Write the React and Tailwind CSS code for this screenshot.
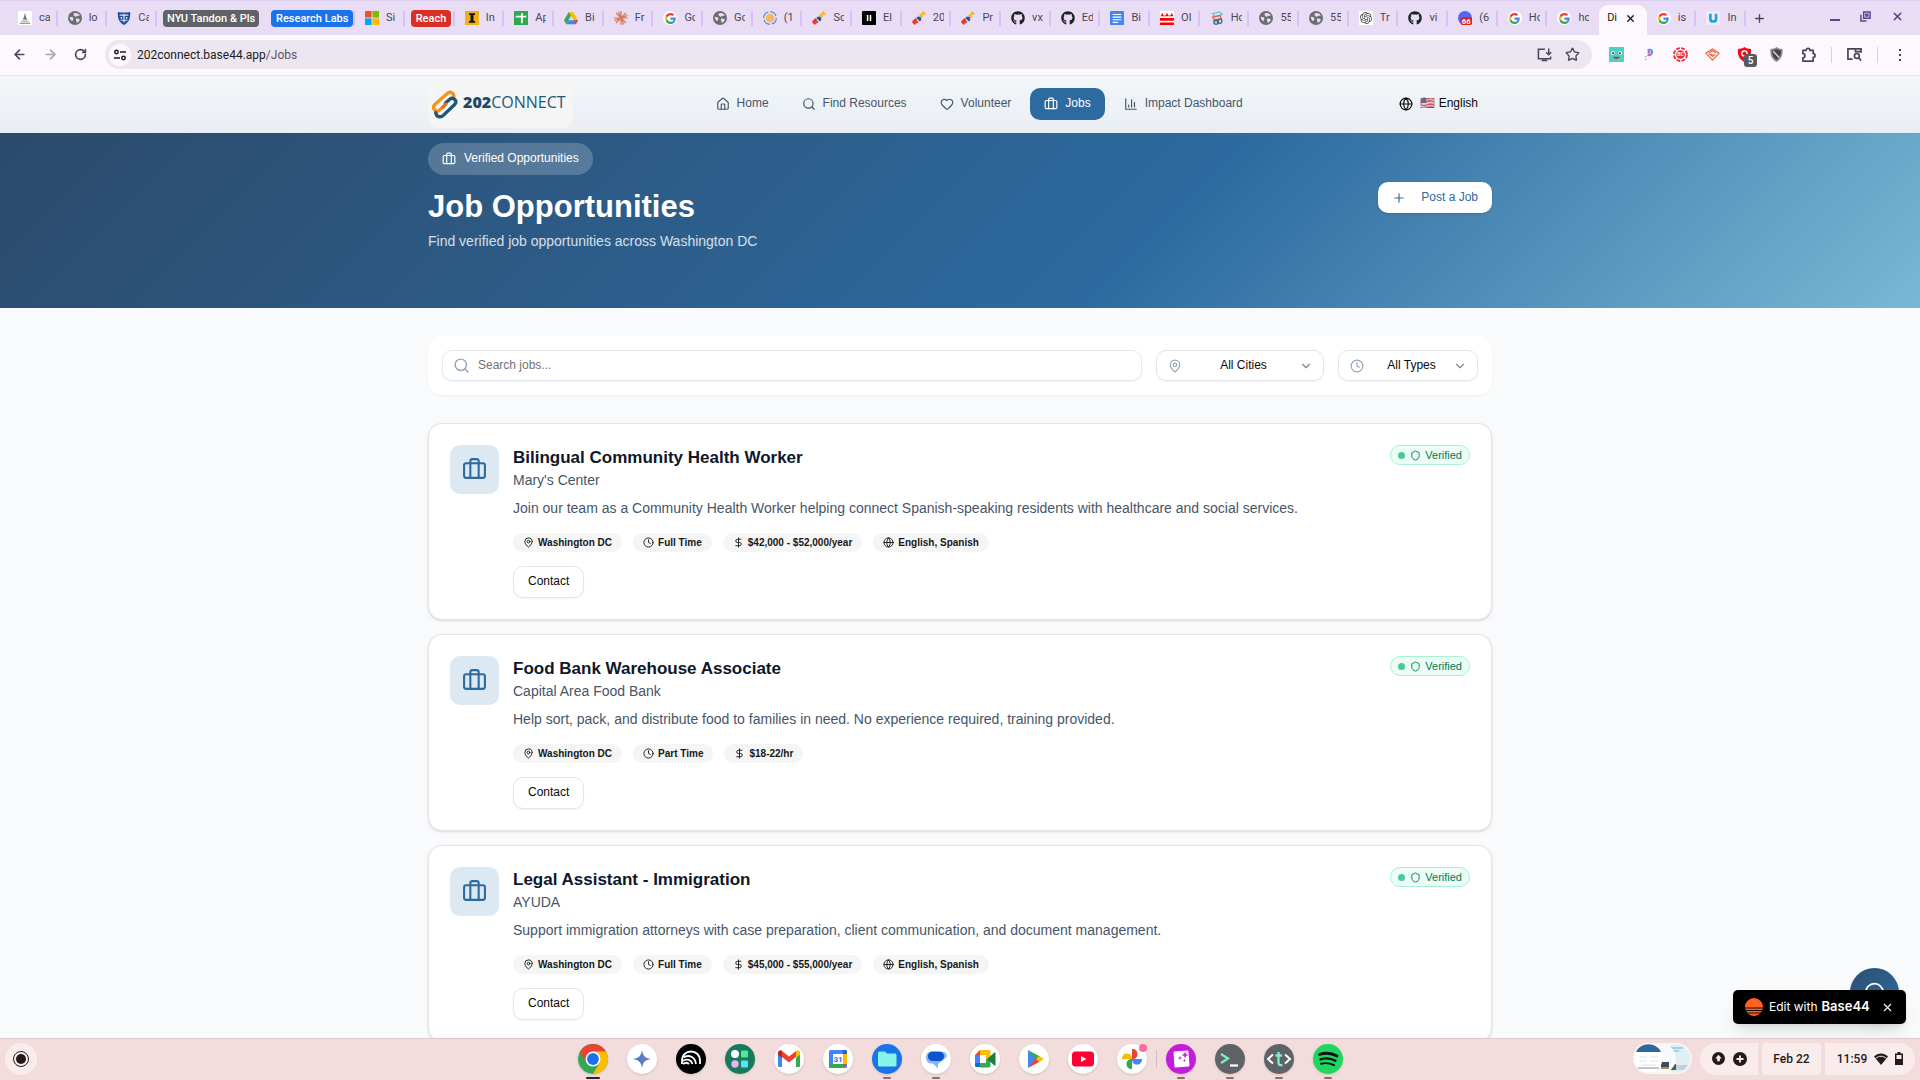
import React, { useState } from "react";
import {
  ArrowLeft,
  ArrowRight,
  Briefcase,
  ChevronDown,
  Clock,
  DollarSign,
  Globe,
  Heart,
  House,
  MapPin,
  MessageCircle,
  Plus,
  RotateCw,
  Search,
  Shield,
  Star,
  X,
} from "lucide-react";
import { FaGithub } from "react-icons/fa";
import { SiOpenai } from "react-icons/si";

const jobs = [
  {
    id: 1,
    title: "Bilingual Community Health Worker",
    company: "Mary's Center",
    description:
      "Join our team as a Community Health Worker helping connect Spanish-speaking residents with healthcare and social services.",
    type: "Full Time",
    pay: "$42,000 - $52,000/year",
    languages: "English, Spanish",
  },
  {
    id: 2,
    title: "Food Bank Warehouse Associate",
    company: "Capital Area Food Bank",
    description:
      "Help sort, pack, and distribute food to families in need. No experience required, training provided.",
    type: "Part Time",
    pay: "$18-22/hr",
  },
  {
    id: 3,
    title: "Legal Assistant - Immigration",
    company: "AYUDA",
    description:
      "Support immigration attorneys with case preparation, client communication, and document management.",
    type: "Full Time",
    pay: "$45,000 - $55,000/year",
    languages: "English, Spanish",
  },
];

const tabs = [
  { icon: "statue", text: "ca" },
  { icon: "globe", text: "lo" },
  { icon: "crest", text: "Ca" },
  { group: "NYU Tandon & Pls", slot: "w-[107px] pl-[6px]", color: "bg-[#5f6368] px-[4px]" },
  { group: "Research Labs", slot: "w-[91px] pl-[7px]", color: "bg-[#1a73e8] px-[5px]", line: true },
  { icon: "microsoft", text: "Si" },
  { group: "Reach", slot: "w-[50px] pl-[6px]", color: "bg-[#d93025] px-[5px]", line: true },
  { icon: "inst", text: "In" },
  { icon: "sheets", text: "Ap" },
  { icon: "drive", text: "Bi" },
  { icon: "claude", text: "Fr" },
  { icon: "google", text: "Go" },
  { icon: "globe", text: "Go" },
  { icon: "ring", text: "(1" },
  { icon: "mlh", text: "So" },
  { icon: "eleven", text: "El" },
  { icon: "mlh", text: "20" },
  { icon: "mlh", text: "Pr" },
  { icon: "github", text: "vx" },
  { icon: "github", text: "Ed" },
  { icon: "docs", text: "Bi" },
  { icon: "dc", text: "Ol" },
  { icon: "hack", text: "Ho" },
  { icon: "globe", text: "55" },
  { icon: "globe", text: "55" },
  { icon: "openai", text: "Tr" },
  { icon: "github", text: "vi" },
  { icon: "discord", text: "(6" },
  { icon: "google", text: "Ho" },
  { icon: "google", text: "ho", noLine: true },
  { active: true, text: "Di" },
  { icon: "google", text: "is" },
  { icon: "udemy", text: "In" },
];

const GoogleG = ({ className = "" }) => (
  <svg viewBox="0 0 48 48" className={className}>
    <path fill="#EA4335" d="M24 9.5c3.5 0 6.700 1.200 9.200 3.600l6.900-6.900C35.900 2.400 30.500 0 24 0 14.600 0 6.500 5.400 2.600 13.200l8 6.200C12.400 13.700 17.700 9.500 24 9.500z" />
    <path fill="#4285F4" d="M47 24.500c0-1.600-.2-3.100-.4-4.500H24v9h12.900c-.6 3-2.200 5.500-4.800 7.200l7.700 6C44.400 38 47 31.800 47 24.500z" />
    <path fill="#FBBC05" d="M10.500 28.600c-.5-1.500-.8-3-.8-4.600s.3-3.100.8-4.600l-8-6.200C.9 16.500 0 20.100 0 24s.9 7.500 2.600 10.800z" />
    <path fill="#34A853" d="M24 48c6.500 0 11.900-2.100 15.900-5.800l-7.700-6c-2.200 1.500-4.900 2.300-8.200 2.300-6.300 0-11.600-4.200-13.500-9.900l-8 6.200C6.500 42.600 14.600 48 24 48z" />
  </svg>
);

const Favicon = ({ name }) => {
  const box = "h-[14px] w-[14px] shrink-0";
  if (name === "google")
    return (
      <span className="flex h-[14px] w-[14px] shrink-0 items-center justify-center rounded-full bg-white">
        <GoogleG className="h-[11px] w-[11px]" />
      </span>
    );
  if (name === "github") return <FaGithub className={`${box} text-[#1f2328]`} />;
  if (name === "openai")
    return (
      <span className="flex h-[14px] w-[14px] shrink-0 items-center justify-center bg-white">
        <SiOpenai className="h-3 w-3 text-[#444]" />
      </span>
    );
  return (
    <svg viewBox="0 0 16 16" className={box}>
      {name === "globe" && (
        <>
          <circle cx="8" cy="8" r="8" fill="#6b6d70" />
          <path d="M2 6.500C4 7 5 6.500 6 8c1 1.500-1 1.500-.5 3.500C4 12 2 9 2 6.500zM7 2.500c2-.8 5 0 6.500 2.500-1 1-2.500 0-3.500 1S8 6.500 7 5.500s-1-2 0-3zM9 9c1.500-1 3.500-.5 4.500 1-.5 2-2 3-3.500 3.500.3-1.500-1.500-3-1-4.500z" fill="#e9ddf5" />
        </>
      )}
      {name === "statue" && (
        <>
          <rect width="16" height="16" fill="#fff" />
          <path d="M8 2l1 4 1.500 4h-5L7 6zM4 11h8v1H4zM2 13.500h12v1H2z" fill="#777" />
        </>
      )}
      {name === "crest" && (
        <>
          <path d="M1 1c4 1 10 1 14 0 .5 7-1.500 12-7 15C2.500 13 .5 8 1 1z" fill="#1f4b99" />
          <path d="M3 4h10v1.500H3zM4 10h8v1H4zM7.300 3h1.400v10H7.300z" fill="#dbe6f7" />
          <circle cx="5" cy="7.800" r="1" fill="#fff" />
          <circle cx="11" cy="7.800" r="1" fill="#fff" />
        </>
      )}
      {name === "microsoft" && (
        <>
          <rect width="7.500" height="7.500" fill="#f25022" />
          <rect x="8.500" width="7.500" height="7.500" fill="#7fba00" />
          <rect y="8.500" width="7.500" height="7.500" fill="#00a4ef" />
          <rect x="8.500" y="8.500" width="7.500" height="7.500" fill="#ffb900" />
        </>
      )}
      {name === "inst" && (
        <>
          <rect width="16" height="16" fill="#eeb211" />
          <path d="M4.500 2.500h7v2.200H9.700v6.600h1.800v2.200h-7v-2.200h1.800V4.700H4.500z" fill="#111" />
        </>
      )}
      {name === "sheets" && (
        <>
          <rect width="16" height="16" fill="#2fa853" />
          <path d="M2 6.500h12M9 2.500v11.500" stroke="#fff" strokeWidth="2" />
        </>
      )}
      {name === "drive" && (
        <>
          <path d="M5.500 1h5l5.500 9.500h-5z" fill="#fbbc04" />
          <path d="M5.500 1L0 10.500 2.500 15 8 5.500z" fill="#34a853" />
          <path d="M2.500 15h11l2.500-4.500H5z" fill="#4285f4" />
          <path d="M11 10.500h5L13.500 15z" fill="#ea4335" />
        </>
      )}
      {name === "claude" && (
        <path d="M8 0v16M0 8h16M2.300 2.300l11.400 11.400M13.700 2.300L2.300 13.700M5 .6l6 14.800M.6 11l14.800-6" stroke="#d97757" strokeWidth="1.400" />
      )}
      {name === "ring" && (
        <>
          <circle cx="8" cy="8" r="7.200" fill="none" stroke="#4b7fd0" strokeWidth="1.200" strokeDasharray="9 2" />
          <circle cx="8" cy="8" r="5" fill="#f4b860" />
        </>
      )}
      {name === "mlh" && (
        <g strokeWidth="2.600" fill="none">
          <path d="M1 12l3 3M3 10l3.500 3.500M1 13l4-4" stroke="#e73427" />
          <path d="M6 7l4 4M7 10l3-3" stroke="#1d539f" />
          <path d="M9 4l3 3M12 1l3 3M10 5l4-3" stroke="#f8b92a" />
        </g>
      )}
      {name === "eleven" && (
        <>
          <rect width="16" height="16" rx="1" fill="#000" />
          <path d="M5.500 4.500h1.800v7H5.500zM8.800 4.500h1.800v7H8.800z" fill="#fff" />
        </>
      )}
      {name === "docs" && (
        <>
          <rect width="16" height="16" rx="1" fill="#4285f4" />
          <path d="M3 4h10M3 7h10M3 10h10M3 13h6" stroke="#fff" strokeWidth="1.400" />
        </>
      )}
      {name === "dc" && (
        <>
          <rect width="16" height="16" fill="#fff" />
          <path d="M0 8h16v3H0zM0 13h16v3H0z" fill="#f00" />
          <path d="M1 5l1.500-3L4 5zM6.500 5L8 2l1.500 3zM12 5l1.500-3L15 5zM1 5h14v1H1z" fill="#f00" />
        </>
      )}
      {name === "hack" && (
        <g fill="none" strokeWidth="1.500">
          <path d="M3 3l8-2 3 3-8 3z" stroke="#5cc9c4" />
          <path d="M3 7l8-2 2 4-7 3z" stroke="#ee5a52" />
          <circle cx="7" cy="12.500" r="2.600" stroke="#2d6f7c" />
          <circle cx="11" cy="11.500" r="2.600" stroke="#2d6f7c" />
        </g>
      )}
      {name === "discord" && (
        <>
          <circle cx="8" cy="8" r="8" fill="#5865f2" />
          <rect x="3" y="7" width="13" height="9" rx="2" fill="#e01e1e" />
          <text x="9.500" y="14.600" textAnchor="middle" fontSize="9" fontWeight="700" fontFamily="Roboto, sans-serif" fill="#fff">66</text>
        </>
      )}
      {name === "udemy" && (
        <>
          <rect width="16" height="16" fill="#f1eafb" />
          <path d="M5 3v6c0 4 6.500 4 6.500 0V3" fill="none" stroke="#1fa2dd" strokeWidth="3" />
        </>
      )}
    </svg>
  );
};

const TabStrip = () => (
  <div className="flex h-[35px] shrink-0 items-stretch border-t border-[#decff0] bg-[#e9ddf5] pl-2 text-[11px] text-[#4a4458]">
    <div className="flex min-w-0 flex-1 items-stretch">
      {tabs.map((tab, i) => {
        if (tab.group) {
          return (
            <div key={i} className={`flex shrink-0 items-center justify-between ${tab.slot}`}>
              <button className={`h-[17px] rounded-[4px] text-[11px] font-medium leading-[17px] whitespace-nowrap text-white ${tab.color}`}>
                {tab.group}
              </button>
              {tab.line && <span className="h-[15px] w-[2px] bg-[#d6c0f8]" />}
            </div>
          );
        }
        if (tab.active) {
          return (
            <div key={i} className="mt-1 ml-[2px] flex min-w-0 flex-1 items-center gap-[8px] rounded-t-[9px] bg-[#fdf7fe] pb-1 pl-[8px]">
              <span className="w-[10px] overflow-hidden text-[#1d1b20]">{tab.text}</span>
              <button aria-label="Close tab">
                <X size={11} strokeWidth={3} className="text-[#1d1b20]" />
              </button>
            </div>
          );
        }
        return (
          <div key={i} className="flex min-w-0 flex-1 items-center pl-[10px]">
            <Favicon name={tab.icon} />
            <span className="ml-[7px] w-[11px] overflow-hidden whitespace-nowrap">{tab.text}</span>
            {!tab.noLine && <span className="ml-auto h-[15px] w-[2px] bg-[#d6c0f8]" />}
          </div>
        );
      })}
    </div>
    <div className="flex w-[174px] items-center justify-between pr-4 pl-[7px] text-[#5b4589]">
      <button aria-label="New tab" className="mr-auto">
        <Plus size={13} strokeWidth={2.500} className="text-[#4a4458]" />
      </button>
      <div className="flex items-center gap-[20px] pb-1">
        <button aria-label="Minimize" className="mt-2 h-[2px] w-[10px] bg-[#5b4589]" />
        <button aria-label="Restore">
          <svg viewBox="0 0 12 12" className="h-[11px] w-[11px]" fill="none" stroke="currentColor" strokeWidth="1.600">
            <path d="M4 1h7v7H4zM1 4v7h6M6.500 3.500h2v2h-2z" />
          </svg>
        </button>
        <button aria-label="Close">
          <X size={13} strokeWidth={3} />
        </button>
      </div>
    </div>
  </div>
);

const Extensions = () => (
  <div className="flex shrink-0 items-center gap-[15px] pr-[13px] text-[#4a4458]">
    <div className="flex items-center gap-[17px]">
      <svg viewBox="0 0 16 16" className="h-[15px] w-[15px]">
        <rect width="16" height="16" rx="1" fill="#4fd1c0" />
        <circle cx="4" cy="6.500" r="2" fill="#fff" />
        <circle cx="12" cy="6.500" r="2" fill="#fff" />
        <circle cx="4.300" cy="6.700" r="1" fill="#222" />
        <circle cx="11.700" cy="6.700" r="1" fill="#222" />
        <path d="M4.500 10.500h7c-.5 3-6.500 3-7 0z" fill="#b23b48" />
      </svg>
      <svg viewBox="0 0 16 16" className="h-[15px] w-[15px]" fill="none" strokeWidth="2">
        <path d="M7 3.500c3.500-2 6 .8 4.200 4" stroke="#4b8cf5" />
        <path d="M11 7.500c-1.200 1.800-3.200 1.500-4 .8" stroke="#a06ae8" />
        <circle cx="8.500" cy="5.500" r=".6" stroke="#f05a4a" />
        <path d="M5 9.500v5" stroke="#f28b82" strokeWidth="1.600" strokeDasharray="1.500 1.500" />
      </svg>
      <svg viewBox="0 0 16 16" className="h-[15px] w-[15px]">
        <circle cx="8" cy="8" r="6.900" fill="#fff" stroke="#ee2b3b" strokeWidth="2" strokeDasharray="4 1.400" />
        <circle cx="8" cy="8" r="4.600" fill="#ee2b3b" />
        <text x="8" y="10" textAnchor="middle" fontSize="5.500" fontWeight="700" fontFamily="Roboto, sans-serif" fill="#fff">BC</text>
      </svg>
      <svg viewBox="0 0 16 16" className="h-[15px] w-[15px]" fill="none" stroke="#f4693c" strokeWidth="1.300">
        <path d="M1 6.500L8 2l7 4.500L8 14zM4 6.500L8 4l4 2.500M4 7l4 3 3-2M6.500 7.500L9 9" />
      </svg>
      <span className="relative">
        <svg viewBox="0 0 16 16" className="h-[15px] w-[15px]">
          <path d="M8 0c2 1.500 4.500 2 7 2 .5 7-1.500 11-7 14C2.500 13 .5 9 1 2c2.500 0 5-.5 7-2z" fill="#e3141c" />
          <circle cx="8" cy="7" r="2.800" fill="none" stroke="#fff" strokeWidth="1.300" />
        </svg>
        <span className="absolute top-[7px] left-[7px] h-[13px] w-[13px] rounded-[3px] bg-[#575a5e] text-center text-[10px] font-medium leading-[13px] text-white">
          5
        </span>
      </span>
      <svg viewBox="0 0 16 16" className="h-[15px] w-[15px]">
        <path d="M8 0c2 1.500 4 2 6.500 2 .5 7-1.500 11-6.500 14C3 13 1 9 1.500 2 4 2 6 1.500 8 0z" fill="#8b8b90" />
        <path d="M8 2c1.500 1 3 1.300 4.800 1.500.2 5-1.300 8-4.800 10.200C4.500 11.500 3 8.500 3.200 3.500 5 3.300 6.500 3 8 2z" fill="#444449" />
        <path d="M4.500 4.500l6.500 7" stroke="#ddd" strokeWidth="1.500" />
      </svg>
      <svg viewBox="0 0 16 16" className="h-[15px] w-[15px]" fill="none" stroke="currentColor" strokeWidth="1.800" strokeLinejoin="round">
        <path d="M2 3.500h3.500a2 2 0 0 1 4 0H13V7a2 2 0 0 1 0 4v4H2v-3.500a2.200 2.200 0 0 0 0-4.400z" />
      </svg>
    </div>
    <span className="h-4 w-px bg-[#dccdf0]" />
    <svg viewBox="0 0 16 16" className="h-[15px] w-[15px]" fill="none" stroke="currentColor" strokeWidth="1.800">
      <path d="M6 13H1V2h14v4M9 2v3h6" />
      <circle cx="10.500" cy="9.500" r="2.600" />
      <path d="M12.500 11.500L15 14.500" />
    </svg>
    <span className="h-4 w-px bg-[#dccdf0]" />
    <button aria-label="Menu" className="flex w-[14px] flex-col items-center gap-[3px]">
      <span className="h-[2px] w-[2px] bg-[#4a4458]" />
      <span className="h-[2px] w-[2px] bg-[#4a4458]" />
      <span className="h-[2px] w-[2px] bg-[#4a4458]" />
    </button>
  </div>
);

const Toolbar = () => (
  <div className="flex h-[41px] shrink-0 items-center border-b border-[#e7dfe9] bg-[#fdf7fe] pb-px text-[#4a4458]">
    <div className="flex w-[105px] shrink-0 items-center gap-4 pl-3">
      <button aria-label="Back"><ArrowLeft size={15} strokeWidth={2.500} /></button>
      <button aria-label="Forward"><ArrowRight size={15} strokeWidth={2.500} className="text-[#aaa3ae]" /></button>
      <button aria-label="Reload"><RotateCw size={13} strokeWidth={3} /></button>
    </div>
    <div className="mr-[17px] flex h-[29px] min-w-0 flex-1 items-center rounded-full bg-[#ece6f0] pr-[12px] pl-[4px]">
      <button aria-label="Site information" className="flex h-[22px] w-[22px] items-center justify-center rounded-full bg-[#fdf7fe]">
        <svg viewBox="0 0 12 12" className="h-3 w-3" fill="none" stroke="#1d1b20" strokeWidth="1.500">
          <circle cx="2.500" cy="3" r="1.700" />
          <path d="M6 3h6M0 9h6" />
          <circle cx="9.500" cy="9" r="1.700" />
        </svg>
      </button>
      <div className="ml-[6px] flex-1 text-[12px] text-[#1d1b20]">
        202connect.base44.app<span className="text-[#5c5566]">/Jobs</span>
      </div>
      <svg viewBox="0 0 16 16" className="h-[15px] w-[15px]" fill="none" stroke="currentColor" strokeWidth="1.600">
        <path d="M8.500 2.500h-7v10h13V10M5 14.500h6M12.500 1.500V8M9.800 5.500l2.700 2.700 2.700-2.700" />
      </svg>
      <Star size={15} strokeWidth={2.200} className="ml-[13px]" />
    </div>
    <Extensions />
  </div>
);

const Logo = () => (
  <a href="#home" className="flex h-12 w-[145px] items-center gap-[5px] rounded-[10px] bg-[#f5f5f5] pl-[3px]">
    <svg viewBox="0 0 56 60" className="h-[29px] w-[27px] shrink-0" fill="none" strokeWidth="7" strokeLinecap="round">
      <path d="M47 15C49 6 40 2 34 7L8 30c-7 7 2 17 9 12l8-7" stroke="#f7941d" />
      <path d="M10 47c1 9 10 11 16 5l23-22c7-8-3-16-10-11l-9 8" stroke="#1f5877" />
      <path d="M24 36l7-7" stroke="#f26a21" />
    </svg>
    <span className="pb-[4px] font-['Open_Sans',sans-serif] text-[16px] font-medium leading-5 text-[#1f5877]">
      <b className="font-extrabold text-[#1c4966]">202</b>CONNECT
    </span>
  </a>
);

const ChartIcon = () => (
  <svg viewBox="0 0 24 24" className="h-[14px] w-[14px]" fill="none" stroke="currentColor" strokeWidth="2" strokeLinecap="round" strokeLinejoin="round">
    <path d="M3 3v18h18M18 17V9M13 17V5M8 17v-3" />
  </svg>
);

const navItems = [
  { label: "Home", icon: <House size={14} /> },
  { label: "Find Resources", icon: <Search size={14} /> },
  { label: "Volunteer", icon: <Heart size={14} /> },
  { label: "Jobs", icon: <Briefcase size={14} />, active: true },
  { label: "Impact Dashboard", icon: <ChartIcon /> },
];

const Header = () => (
  <header className="border-b border-[#e6edf3] bg-linear-to-b from-[#f3f7f9] to-[#e9eef4]">
    <div className="mx-auto flex h-14 max-w-[1120px] items-center justify-between px-7">
      <Logo />
      <nav className="flex items-center gap-[5px]">
        {navItems.map((item) => (
          <a
            key={item.label}
            href={`#${item.label}`}
            className={`flex h-8 items-center gap-[7px] rounded-[10px] px-[14px] text-[12px] ${
              item.active ? "bg-[#2d6a9f] text-white" : "text-[#475569]"
            }`}
          >
            {item.icon}
            <span className="pb-[2px]">{item.label}</span>
          </a>
        ))}
      </nav>
      <button className="flex h-8 items-center gap-[7px] px-[14px] text-[12px] text-[#0a0a0a]">
        <Globe size={14} />
        <span className="pb-[2px]">🇺🇸 English</span>
      </button>
    </div>
  </header>
);

const Hero = () => (
  <section className="bg-[linear-gradient(135deg,#2c4a6b_0%,#2d6a9f_60%,#7ab8d6_100%)] pt-[10px] pb-14">
    <div className="mx-auto flex max-w-[1120px] items-center justify-between px-7">
      <div>
        <div className="flex h-8 w-fit items-center gap-[8px] rounded-full bg-white/20 px-[14px] text-[12px] text-white">
          <Briefcase size={14} />
          <span className="pb-[2px]">Verified Opportunities</span>
        </div>
        <h1 className="mt-[14px] text-[31px] font-bold leading-[35px] text-white">Job Opportunities</h1>
        <p className="mt-[7px] text-[14px] leading-[21px] text-white/80">
          Find verified job opportunities across Washington DC
        </p>
      </div>
      <button className="flex h-[31px] items-center rounded-[10px] bg-white px-[14px] text-[12px] text-[#2d6a9f] shadow-sm">
        <Plus size={14} className="mr-[15px]" />
        <span className="pb-[2px]">Post a Job</span>
      </button>
    </div>
  </section>
);

const FilterSelect = ({ icon, label, options, className }) => {
  const [value, setValue] = useState(options[0]);
  return (
    <label className={`flex h-[31px] items-center rounded-[10px] border border-[#e5e5e5] pr-[10px] pl-[11px] shadow-xs ${className}`}>
      {icon}
      <select
        aria-label={label}
        value={value}
        onChange={(e) => setValue(e.target.value)}
        className="min-w-0 flex-1 appearance-none bg-transparent pb-[2px] pl-[6px] text-center text-[12px] text-[#0a0a0a] outline-none [text-align-last:center]"
      >
        {options.map((o) => (
          <option key={o}>{o}</option>
        ))}
      </select>
      <ChevronDown size={14} className="text-[#858585]" />
    </label>
  );
};

const Tag = ({ icon: Icon, children }) => (
  <span className="flex h-[19px] items-center gap-1 rounded-full bg-[#f5f5f5] px-[10px] text-[10px] font-semibold text-[#171717]">
    <Icon size={11} />
    {children}
  </span>
);

const JobCard = ({ job }) => (
  <article className="flex items-start gap-[14px] rounded-[14px] border border-[#e4e4e7] bg-white p-[21px] shadow-sm">
    <div className="flex h-[49px] w-[49px] shrink-0 items-center justify-center rounded-[10px] bg-[#dce8f2]">
      <Briefcase size={25} className="text-[#2d6a9f]" />
    </div>
    <div className="min-w-0 flex-1">
      <h3 className="text-[17px] font-semibold leading-[25px] text-[#0f172a]">{job.title}</h3>
      <p className="text-[14px] leading-[21px] text-[#475569]">{job.company}</p>
      <p className="mt-[7px] text-[14px] leading-[21px] text-[#475569]">{job.description}</p>
      <div className="mt-[14px] flex flex-wrap gap-[11px]">
        <Tag icon={MapPin}>Washington DC</Tag>
        <Tag icon={Clock}>{job.type}</Tag>
        <Tag icon={DollarSign}>{job.pay}</Tag>
        {job.languages && <Tag icon={Globe}>{job.languages}</Tag>}
      </div>
      <button className="mt-[14px] block h-8 rounded-[10px] border border-[#e5e5e5] bg-white px-[14px] pb-[2px] text-[12px] text-[#0a0a0a] shadow-xs">
        Contact
      </button>
    </div>
    <span className="flex h-5 items-center rounded-full border border-[#a7f3d0] bg-[#ecfdf5] px-[7px] text-[11px] text-[#047857]">
      <span className="mr-[5px] h-[7px] w-[7px] rounded-full bg-[#47c99a]" />
      <Shield size={11} className="mr-[4px]" />
      Verified
    </span>
  </article>
);

const JobsPage = () => (
  <main className="relative min-h-0 flex-1 overflow-hidden bg-[#f8fafc] font-['Liberation_Sans',Arial,sans-serif]">
    <Header />
    <Hero />
    <div className="mx-auto max-w-[1120px] px-7 py-7">
      <div className="flex gap-[14px] rounded-[14px] bg-white p-[14px] shadow-xs">
        <label className="flex h-[31px] min-w-0 flex-1 items-center gap-[8px] rounded-[10px] border border-[#e2e8f0] pl-[10px] shadow-xs">
          <Search size={17} className="text-[#94a3b8]" />
          <input
            type="text"
            aria-label="Search jobs"
            placeholder="Search jobs..."
            className="min-w-0 flex-1 bg-transparent pb-[2px] text-[12px] outline-none placeholder:text-[#737373]"
          />
        </label>
        <FilterSelect
          label="City"
          className="w-[168px]"
          icon={<MapPin size={14} className="text-[#94a3b8]" />}
          options={["All Cities", "Washington DC"]}
        />
        <FilterSelect
          label="Job type"
          className="w-[140px]"
          icon={<Clock size={14} className="text-[#94a3b8]" />}
          options={["All Types", "Full Time", "Part Time"]}
        />
      </div>
      <div className="mt-7 flex flex-col gap-[14px]">
        {jobs.map((job) => (
          <JobCard key={job.id} job={job} />
        ))}
      </div>
    </div>

    {/* floating chat + badge */}
    <button
      aria-label="Chat"
      className="absolute right-[21px] bottom-[21px] flex h-[49px] w-[49px] items-center justify-center rounded-full bg-linear-to-br from-[#2c4f73] to-[#2d6a9f] text-white shadow-lg"
    >
      <MessageCircle size={21} />
    </button>
    <div className="absolute right-[14px] bottom-[14px] flex h-[34px] w-[173px] items-center rounded-[5px] bg-black pr-[12px] pl-[12px] text-white shadow-lg">
      <svg viewBox="0 0 18 18" className="h-[18px] w-[18px]">
        <circle cx="9" cy="9" r="9" fill="#ff631f" />
        <path d="M0 10h18M0 12.500h18M0 15h18" stroke="#000" strokeWidth=".9" />
      </svg>
      <a href="#edit" className="ml-[6px] flex flex-1 items-center gap-1 whitespace-nowrap font-['Inter',sans-serif] text-[12px]">
        Edit with <b className="text-[13px] font-semibold">Base44</b>
      </a>
      <button aria-label="Dismiss">
        <X size={13} />
      </button>
    </div>
  </main>
);

const shelfApps = [
  {
    name: "Chrome",
    bg: "bg-white",
    mark: "bg-[#2b2224]",
    art: (
      <>
        <circle cx="15" cy="15" r="15" fill="#34a853" />
        <path d="M2 7.500A15 15 0 0 1 28 7.500H15L8.500 19z" fill="#ea4335" />
        <path d="M28 7.500A15 15 0 0 1 15 30l6.500-11.200L15 7.500z" fill="#fbbc04" />
        <circle cx="15" cy="15" r="7.500" fill="#fff" />
        <circle cx="15" cy="15" r="5.900" fill="#1a73e8" />
      </>
    ),
  },
  {
    name: "Gemini",
    bg: "bg-white",
    art: (
      <>
        <defs>
          <linearGradient id="gem" x1="0" x2="1"><stop stopColor="#2f86c8" /><stop offset="1" stopColor="#8a6cc8" /></linearGradient>
        </defs>
        <path d="M15 6c1 6 3 8 9 9-6 1-8 3-9 9-1-6-3-8-9-9 6-1 8-3 9-9z" fill="url(#gem)" />
      </>
    ),
  },
  {
    name: "Nearpod",
    bg: "bg-black",
    art: (
      <g fill="none" stroke="#fff" strokeWidth="1.800">
        <path d="M6 20v-3C6 11 10 7.500 15 7.500S24 11 24 17v3" />
        <path d="M7.500 13.500C13 10 19 13 20 20" />
        <path d="M6.500 17c4.500-3 9-1 10 3M7 20c2-1.500 4.500-1.500 6 0" />
      </g>
    ),
  },
  {
    name: "Apps",
    bg: "bg-[#187a5c]",
    art: (
      <>
        <circle cx="10" cy="10" r="4" fill="#fff" />
        <rect x="16" y="6.500" width="7" height="7" rx="1" fill="#4ceb90" />
        <circle cx="10" cy="20" r="3.700" fill="#efb2ef" />
        <rect x="16" y="16.500" width="7" height="7" rx="1" fill="#5ae3f2" />
      </>
    ),
  },
  {
    name: "Gmail",
    bg: "bg-white",
    art: (
      <>
        <path d="M4 8h4v15H5.500A1.500 1.500 0 0 1 4 21.500z" fill="#4285f4" />
        <path d="M22 8h4v13.500a1.500 1.500 0 0 1-1.500 1.500H22z" fill="#34a853" />
        <path d="M4 9c0-2.500 2.500-3 4-2l7 5.500L22 7v6l-7 5.500L8 13l-4-3z" fill="#ea4335" />
        <path d="M22 7c2-1.500 4-.5 4 2v1.500L22 14z" fill="#fbbc04" />
        <path d="M4 9c0-2 2-3 4-2v7l-4-3.500z" fill="#c5221f" />
      </>
    ),
  },
  {
    name: "Calendar",
    bg: "bg-white",
    art: (
      <>
        <rect x="6" y="6" width="18" height="18" rx="1.500" fill="#4285f4" />
        <path d="M20 6h2.500A1.500 1.500 0 0 1 24 7.500V10h-4z" fill="#1967d2" />
        <path d="M20 10h4v10h-4z" fill="#fbbc04" />
        <path d="M6 20h14v4H7.500A1.500 1.500 0 0 1 6 22.500z" fill="#34a853" />
        <path d="M20 20h4l-4 4z" fill="#ea4335" />
        <rect x="10" y="10" width="10" height="10" fill="#fff" />
        <text x="15" y="18" textAnchor="middle" fontSize="8" fontWeight="700" fontFamily="Roboto, sans-serif" fill="#1a73e8">31</text>
      </>
    ),
  },
  {
    name: "Files",
    bg: "bg-[#1a73e8]",
    mark: "bg-[#8d6b6b]",
    art: <path d="M6 9a1.500 1.500 0 0 1 1.500-1.500H13l2 2h8A1.500 1.500 0 0 1 24.500 11v10a1.500 1.500 0 0 1-1.500 1.500H7.500A1.500 1.500 0 0 1 6 21z" fill="#86f5ea" />,
  },
  {
    name: "Messages",
    bg: "bg-white",
    mark: "bg-[#8d6b6b]",
    art: (
      <>
        <path d="M9 8h13a3.500 3.500 0 0 1 2 6.500L17 20v4.500L12 19.500h-2c-3 0-5-3-5-6 0-2.500 1-5 4-5.500z" fill="#8ab4f8" />
        <rect x="7" y="7.500" width="16" height="9.500" rx="4.500" fill="#0b57d0" />
      </>
    ),
  },
  {
    name: "Meet",
    bg: "bg-white",
    art: (
      <>
        <path d="M5 11l5-5v5z" fill="#ea4335" />
        <path d="M10 6h9a1.500 1.500 0 0 1 1.500 1.500V15H16v-4h-6z" fill="#fbbc04" />
        <path d="M5 11h5v8H5z" fill="#4285f4" />
        <path d="M5 19h5v4H6.500A1.500 1.500 0 0 1 5 21.500z" fill="#1967d2" />
        <path d="M10 19h6v-4h4.500v7a1.500 1.500 0 0 1-1.500 1.500h-9z" fill="#34a853" />
        <path d="M17 15l7.500-6.500a.7.700 0 0 1 1 .5v12a.7.700 0 0 1-1 .5z" fill="#188038" />
      </>
    ),
  },
  {
    name: "Play",
    bg: "bg-white",
    art: (
      <>
        <path d="M9 6l9 9-9 9z" fill="#4285f4" />
        <path d="M9 6l12 6.500-4 3.500z" fill="#34a853" />
        <path d="M9 24l12-6.500-4-3.500z" fill="#ea4335" />
        <path d="M20 12l5 3-5 3-3-3z" fill="#fbbc04" />
      </>
    ),
  },
  {
    name: "YouTube",
    bg: "bg-white",
    art: (
      <>
        <rect x="4" y="7.500" width="22" height="15" rx="3.500" fill="#ff0033" />
        <path d="M13 12l5.500 3-5.500 3z" fill="#fff" />
      </>
    ),
  },
  {
    name: "Photos",
    bg: "bg-white",
    art: (
      <>
        <path d="M15 15V5c3.500 0 5.500 2 5.500 5s-2 5-5.500 5z" fill="#ea4335" />
        <path d="M15 15h10c0 3.500-2 5.500-5 5.500s-5-2-5-5.500z" fill="#4285f4" />
        <path d="M15 15v10c-3.500 0-5.500-2-5.500-5s2-5 5.500-5z" fill="#34a853" />
        <path d="M15 15H5c0-3.500 2-5.500 5-5.500s5 2 5 5.500z" fill="#fbbc04" />
        <circle cx="26" cy="4" r="4" fill="#ff6ba0" />
      </>
    ),
  },
  {
    name: "Gallery",
    bg: "bg-[#c41bdc]",
    mark: "bg-[#8d6b6b]",
    divided: true,
    art: (
      <>
        <rect x="8" y="7" width="15" height="16" rx="1" fill="#fff" transform="rotate(-4 15 15)" />
        <path d="M19 8.500v5M16.500 11h5" stroke="#c41bdc" strokeWidth="1.500" />
        <path d="M14 12.500v3M12.500 14h3M18.500 15.500v2M17.500 16.500h2" stroke="#c41bdc" />
      </>
    ),
  },
  {
    name: "Terminal",
    bg: "bg-[#5f6368]",
    mark: "bg-[#8d6b6b]",
    art: (
      <>
        <path d="M6 10l7 4.500L6 19" fill="none" stroke="#80eec0" strokeWidth="2.200" />
        <path d="M15 21.500h8" stroke="#fff" strokeWidth="2.200" />
      </>
    ),
  },
  {
    name: "Text",
    bg: "bg-[#5f6368]",
    mark: "bg-[#8d6b6b]",
    art: (
      <>
        <path d="M9 10.500L4 15l5 4.500M21 10.500l5 4.500-5 4.500" fill="none" stroke="#fff" strokeWidth="2" />
        <path d="M14.500 8v11c0 2 1.500 2.500 4 2M11.500 11.500H18" fill="none" stroke="#80eec0" strokeWidth="2.300" />
      </>
    ),
  },
  {
    name: "Spotify",
    bg: "bg-[#1ed760]",
    mark: "bg-[#8d6b6b]",
    art: (
      <g fill="none" stroke="#111" strokeLinecap="round">
        <path d="M6.500 10.500c6-2 12.500-1.300 17.500 1.500" strokeWidth="2.800" />
        <path d="M7.500 15.300c5-1.500 10.500-1 15 1.500" strokeWidth="2.300" />
        <path d="M8 19.700c4.500-1 9-.7 13 1.500" strokeWidth="1.900" />
      </g>
    ),
  },
];

const Shelf = () => (
  <footer className="flex h-[42px] shrink-0 items-center border-t border-[#dcc6c6] bg-[#f2dddc] pb-[2px] text-[#241a1b]">
    <div className="flex flex-1 pl-[5px]">
      <button aria-label="Launcher" className="flex h-8 w-8 items-center justify-center rounded-full bg-[#faeced]">
        <span className="flex h-4 w-4 items-center justify-center rounded-full border border-[#241a1b]">
          <span className="h-[10px] w-[10px] rounded-full bg-[#241a1b]" />
        </span>
      </button>
    </div>
    <div className="flex items-center gap-[19px]">
      {shelfApps.map((app) => (
        <button key={app.name} aria-label={app.name} className="relative">
          {app.divided && <span className="absolute top-[6px] -left-[10px] h-[18px] w-px bg-[#d5bcbc]" />}
          <svg viewBox="0 0 30 30" className={`h-[30px] w-[30px] overflow-visible rounded-full shadow ${app.bg}`}>
            {app.art}
          </svg>
          {app.mark && (
            <span className="absolute -bottom-[5px] left-0 flex w-full justify-center">
              <span className={`h-[2px] rounded-full ${app.name === "Chrome" ? "w-[14px]" : "w-2"} ${app.mark}`} />
            </span>
          )}
        </button>
      ))}
    </div>
    <div className="flex flex-1 items-center justify-end gap-1 pr-[5px] text-[12px] font-medium">
      <svg viewBox="0 0 59 31" className="mr-1 h-[31px] w-[59px]">
        <rect width="59" height="31" rx="15.500" fill="#fbf3f4" />
        <circle cx="43" cy="15.500" r="14" fill="#dff0f5" />
        <path d="M38 5h12M38 8h8" stroke="#8fc3da" strokeWidth="1.500" />
        <path d="M43 22h12l-4 5h-8z" fill="#c3d2da" />
        <path d="M38 21h5v6h-5z" fill="#555" />
        <circle cx="29" cy="15.500" r="14" fill="#f6fafc" />
        <path d="M28 19h8v5h-8z" fill="#3d4a59" />
        <path d="M28 24h8v2h-8z" fill="#b08d5a" />
        <circle cx="15.500" cy="15.500" r="14" fill="#fff" />
        <path d="M3 9a14 14 0 0 1 25 0z" fill="#2f689c" />
        <path d="M6 14h8M17 14h8M6 18h8M17 18h8M8 22h15" stroke="#dfe2e6" />
        <path d="M5 25h21" stroke="#8a8f96" />
      </svg>
      <button aria-label="Quick actions" className="flex h-8 w-[58px] items-center justify-center gap-2 rounded-l-full rounded-r-[4px] bg-[#faeced]">
        <svg viewBox="0 0 14 14" className="h-[13px] w-[13px]">
          <circle cx="7" cy="7" r="7" fill="#241a1b" />
          <path d="M7 3l3.500 4H8.500v3h-3V7h-2z" fill="#faeced" />
        </svg>
        <svg viewBox="0 0 14 14" className="h-[14px] w-[14px]">
          <circle cx="7" cy="7" r="7" fill="#241a1b" />
          <path d="M7 3.500v7M3.500 7h7" stroke="#faeced" strokeWidth="1.800" />
        </svg>
      </button>
      <button className="h-8 w-[59px] rounded-[4px] bg-[#faeced]">Feb 22</button>
      <button className="flex h-8 w-[90px] items-center justify-center gap-[7px] rounded-l-[4px] rounded-r-full bg-[#faeced]">
        11:59
        <svg viewBox="0 0 14 12" className="h-3 w-[14px]">
          <path d="M0 3.500c4-4 10-4 14 0L7 12z" fill="currentColor" />
          <path d="M1.500 5.500c3.500-3 7.500-3 11 0" fill="none" stroke="#faeced" />
        </svg>
        <svg viewBox="0 0 8 13" className="h-[13px] w-2">
          <path d="M2.500 0h3v1.500H8V13H0V1.500h2.500z" fill="currentColor" />
          <path d="M1.500 3h5v4h-5z" fill="#faeced" />
        </svg>
      </button>
    </div>
  </footer>
);

const App = () => {
  return (
    <div className="flex h-screen flex-col overflow-hidden font-['Roboto',sans-serif]">
      <TabStrip />
      <Toolbar />
      <JobsPage />
      <Shelf />
    </div>
  );
};

export default App;
